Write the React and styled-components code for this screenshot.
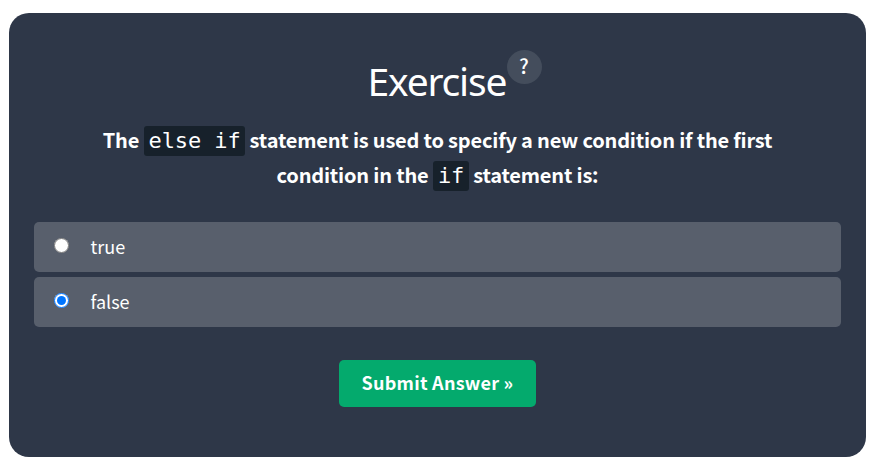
import React, { useState } from "react";
import styled, { createGlobalStyle } from "styled-components";

const Global = createGlobalStyle`
  *, *::before, *::after { box-sizing: border-box; }
  body { margin: 0; background: #fff; }
`;

const sans = `"Noto Sans CJK SC", "Noto Sans", sans-serif`;

const Card = styled.main`
  width: 857px;
  height: 444px;
  margin: 13px 0 0 9px;
  padding: 37px 25px 0;
  border-radius: 20px;
  background: #2e3748;
  color: #fff;
  font-family: ${sans};
  display: flex;
  flex-direction: column;
`;

const Header = styled.header`
  display: flex;
  justify-content: center;
  align-items: flex-start;
  height: 70px;
  padding-left: 34px;
`;

const Title = styled.h2`
  margin: 4px 0 0;
  font: 400 39px/54px "Noto Sans", "Open Sans", sans-serif;
  width: 139px;
  white-space: nowrap;
  letter-spacing: -1.2px;
`;

const Help = styled.button`
  width: 35px;
  height: 34px;
  padding: 0 0 2px;
  border: 0;
  border-radius: 50%;
  background: #444d5c;
  color: #fff;
  font: 500 20px/32px ${sans};
`;

const Question = styled.p`
  margin: 2px 0 0;
  text-align: center;
  font-size: 20px;
  font-weight: 700;
  line-height: 35px;
  letter-spacing: -0.19px;
  white-space: nowrap;
`;

const Line = styled.span`
  display: flex;
  justify-content: center;
  align-items: center;
  height: 35px;
  gap: 4.5px;
`;

const Code = styled.code`
  height: 30px;
  margin-top: 2px;
  padding: 0 4.5px 0 5px;
  border-radius: 3px;
  background: #17212b;
  font: 400 22px/30px "DejaVu Sans Mono", monospace;
  letter-spacing: -0.1px;
`;

const Options = styled.div`
  display: grid;
  gap: 5px;
  margin-top: 30px;
`;

const Option = styled.label`
  display: flex;
  align-items: center;
  height: 50px;
  padding-left: 20px;
  border-radius: 5px;
  background: #585f6c;
  font-size: 18px;
  line-height: 48px;
`;

const Label = styled.span`
  height: 50px;
`;

const Radio = styled.input`
  width: 15px;
  height: 15px;
  margin: 0 21.5px 4px 0;
`;

const Submit = styled.button`
  align-self: center;
  width: 197px;
  height: 47px;
  margin-top: 33px;
  padding: 0 0 2px;
  border: 0;
  border-radius: 5px;
  background: #04aa6d;
  color: #fff;
  font: 700 18px/45px ${sans};
  letter-spacing: 0.25px;
`;

export default function App() {
  const [answer, setAnswer] = useState("false");
  return (
    <>
      <Global />
      <Card>
        <Header>
          <Title>Exercise</Title>
          <Help type="button">?</Help>
        </Header>
        <Question>
          <Line>
            <span>The</span>
            <Code>else if</Code>
            <span>statement is used to specify a new condition if the first</span>
          </Line>
          <Line>
            <span>condition in the</span>
            <Code>if</Code>
            <span>statement is:</span>
          </Line>
        </Question>
        <Options>
          {["true", "false"].map((value) => (
            <Option key={value}>
              <Radio
                type="radio"
                name="answer"
                checked={answer === value}
                onChange={() => setAnswer(value)}
              />
              <Label>{value}</Label>
            </Option>
          ))}
        </Options>
        <Submit type="button">Submit Answer »</Submit>
      </Card>
    </>
  );
}
